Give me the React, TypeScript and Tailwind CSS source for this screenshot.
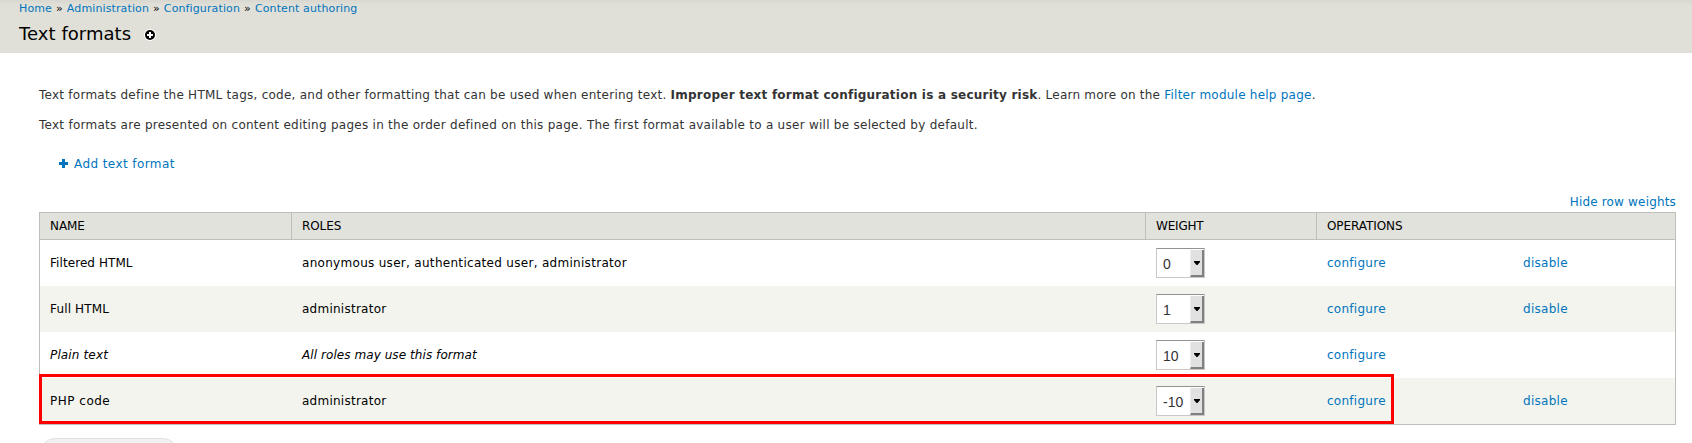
const rows = [
  { name: "Filtered HTML", nameStyle: "tracking-[0.07px]", roles: "anonymous user, authenticated user, administrator", rolesStyle: "tracking-[0.3px]", weight: "0", disable: true },
  { name: "Full HTML", nameStyle: "tracking-[0.15px]", roles: "administrator", rolesStyle: "tracking-[0.25px]", weight: "1", disable: true },
  { name: "Plain text", nameStyle: "italic tracking-[0.14px]", roles: "All roles may use this format", rolesStyle: "italic tracking-[0.07px]", weight: "10", disable: false },
  { name: "PHP code", nameStyle: "tracking-[0.5px]", roles: "administrator", rolesStyle: "tracking-[0.25px]", weight: "-10", disable: true },
];

const columns = "grid grid-cols-[252px_854px_171px_196px_1fr]";

function Link({ children }: { children: string }) {
  return <a href="#" className="text-[#0074bd]">{children}</a>;
}

function WeightSelect({ value }: { value: string }) {
  return (
    <button type="button" className="flex h-[30px] w-[49px] border border-[#c8c8c8] border-t-[#929292] bg-white">
      <span className="mt-[6px] w-[33px] pl-[6px] text-left font-['Liberation_Sans'] text-[14px] leading-[18px] tracking-normal text-[#333]">{value}</span>
      <span className="mt-px flex h-[27px] w-[14px] items-center justify-center border-r-2 border-b-2 border-l border-[#808080] border-l-[#ececec] bg-[#e1e1e1] pt-px pl-px">
        <svg width="6" height="4" viewBox="0 0 6 4"><path d="M0 0h6v1L3.5 4h-1L0 1z" /></svg>
      </span>
    </button>
  );
}

export default function App() {
  return (
    <div className="h-[443px] w-[1692px] overflow-hidden bg-white font-['DejaVu_Sans',sans-serif] text-[12px] text-black">
      <header className="h-[53px] bg-[#e0e0d8] bg-linear-to-b from-[#d8d8d1] to-[#e0e0d8] to-[5px] pl-[19px]">
        <nav className="flex h-[17px] gap-1 pt-px text-[11px] leading-[16px] tracking-[0.12px]">
          <Link>Home</Link><span>»</span><Link>Administration</Link><span>»</span><Link>Configuration</Link><span>»</span><Link>Content authoring</Link>
        </nav>
        <div className="flex items-center pt-[5px]">
          <h1 className="text-[18px] leading-[24px] tracking-[0.05px]">Text formats</h1>
          <svg className="mt-[2px] ml-[13px]" width="12" height="12" viewBox="0 0 12 12"><circle cx="6" cy="6" r="6" fill="#fff" /><circle cx="6" cy="6" r="5" /><path d="M5 3h2v2h2v2H7v2H5V7H3V5h2z" fill="#fff" /></svg>
        </div>
      </header>
      <main className="pt-[32px] pr-[16px] pl-[39px]">
        <div className="text-[#333]">
          <p className="h-[30px] leading-[20px] tracking-[0.23px]">
            <span className="tracking-[0.252px]">Text formats define the HTML tags, code, and other formatting that can be used when entering text. </span>
            <strong>Improper text format configuration is a security risk</strong>. Learn more on the <Link>Filter module help page</Link>.
          </p>
          <p className="h-[39px] leading-[20px] tracking-[0.264px]">
            Text formats are presented on content editing pages in the order defined on this page. The first format available to a user will be selected by default.
          </p>
        </div>
        <div className="flex h-[38px] items-start pl-5 leading-[20px] tracking-[0.42px]">
          <svg className="mt-[5px] mr-[6px]" width="9" height="9" viewBox="0 0 9 9" fill="#0074bd"><path d="M3 0h3v3h3v3H6v3H3V6H0V3h3z" /></svg>
          <Link>Add text format</Link>
        </div>
        <div className="flex h-[20px] justify-end leading-[20px] tracking-[0.17px]"><Link>Hide row weights</Link></div>
        <div className="relative border border-[#bebfb9]">
          <div className={`${columns} h-[27px] border-b border-[#bebfb9] bg-[#e1e2dc] leading-[26px] tracking-[-0.08px]`}>
            <div className="border-r border-[#bebfb9] pl-[10px]">NAME</div>
            <div className="border-r border-[#bebfb9] pl-[10px]">ROLES</div>
            <div className="border-r border-[#bebfb9] pl-[10px] tracking-[-0.2px]">WEIGHT</div>
            <div className="pl-[10px]">OPERATIONS</div>
          </div>
          {rows.map((r) => (
            <div key={r.name} className={`${columns} h-[46px] leading-[46px] tracking-[0.27px] even:bg-white odd:bg-[#f3f4ee]`}>
              <div className={`pl-[10px] ${r.nameStyle}`}>{r.name}</div>
              <div className={`pl-[10px] ${r.rolesStyle}`}>{r.roles}</div>
              <div className="pt-[8px] pl-[10px]"><WeightSelect value={r.weight} /></div>
              <div className="pl-[10px]"><Link>configure</Link></div>
              <div className="pl-[10px]">{r.disable && <Link>disable</Link>}</div>
            </div>
          ))}
          <div className="absolute top-[161px] -left-px h-[50px] w-[1355px] border-3 border-[#f00]" />
        </div>
        <div className="mt-[13px] ml-[1px] h-[30px] w-[138px] rounded-full border border-[#e0e0e0] bg-[#f1f1f1]" />
      </main>
    </div>
  );
}
